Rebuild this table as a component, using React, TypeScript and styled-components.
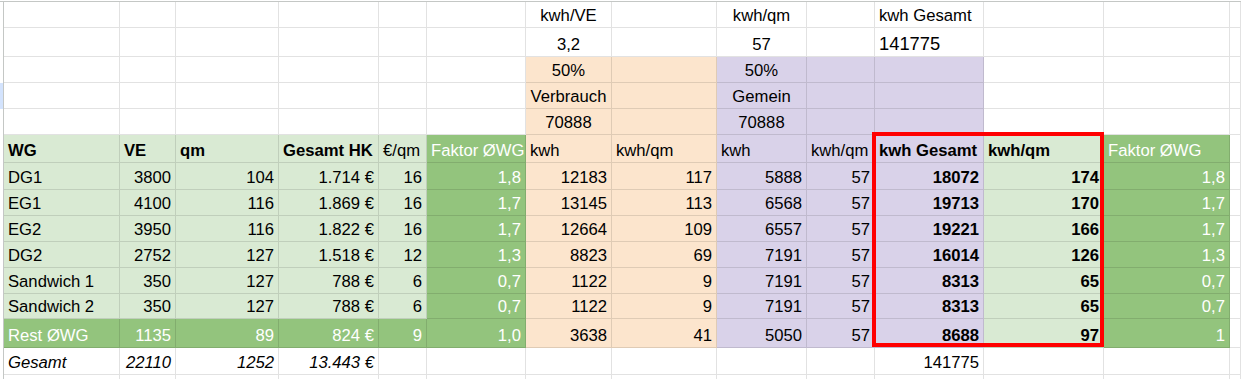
import React from 'react';
import styled, { createGlobalStyle } from 'styled-components';

const GlobalStyle = createGlobalStyle`
  html, body {
    margin: 0;
    padding: 0;
    background: #ffffff;
  }
  body {
    font-family: "Liberation Sans", Arial, sans-serif;
  }
`;

// column tracks: row-header strip, A..M, then the clipped N
const COLUMNS = '4px 116px 56px 103px 100px 48px 99px 86px 105px 90px 68px 109px 120px 126px 1fr';

const fills = {
  white: '#ffffff',
  mint: '#d9ead3',
  green: '#93c47d',
  peach: '#fce5cd',
  lilac: '#d9d2e9',
};

type Fill = keyof typeof fills;
type Align = 'left' | 'center' | 'right';

type CellSpec = {
  text?: string;
  fill?: Fill;
  align?: Align;
  bold?: boolean;
  italic?: boolean;
  light?: boolean;
  big?: boolean;
};

type RowSpec = {
  height: number;
  selected?: boolean;
  cells: CellSpec[];
};

const Sheet = styled.div`
  position: relative;
  width: 1241px;
  height: 379px;
  overflow: hidden;
  font-size: 16.67px;
  color: #000000;
`;

const TopRule = styled.div`
  height: 1px;
  margin-top: 1px;
  background: #c4c7c5;
`;

const Row = styled.div<{ $height: number }>`
  display: grid;
  grid-template-columns: ${COLUMNS};
  height: ${(p) => p.$height}px;
`;

const RowHandle = styled.div<{ $selected?: boolean }>`
  box-sizing: border-box;
  border-right: 1px solid #c4c7c5;
  background: ${(p) => (p.$selected ? '#d3e3fd' : '#ffffff')};
`;

const justify: Record<Align, string> = {
  left: 'flex-start',
  center: 'center',
  right: 'flex-end',
};

const Cell = styled.div<{
  $fill: Fill;
  $align: Align;
  $bold?: boolean;
  $italic?: boolean;
  $light?: boolean;
  $big?: boolean;
}>`
  box-sizing: border-box;
  display: flex;
  align-items: flex-end;
  justify-content: ${(p) => justify[p.$align]};
  min-width: 0;
  padding: 0 4px 2px;
  border-right: 1px solid rgba(0, 0, 0, 0.115);
  border-bottom: 1px solid rgba(0, 0, 0, 0.115);
  background: ${(p) => fills[p.$fill]};
  color: ${(p) => (p.$light ? '#ffffff' : '#000000')};
  font-weight: ${(p) => (p.$bold ? 700 : 400)};
  font-style: ${(p) => (p.$italic ? 'italic' : 'normal')};
  font-size: ${(p) => (p.$big ? '18.33px' : 'inherit')};
  line-height: ${(p) => (p.$big ? '21px' : '19px')};
  white-space: nowrap;
`;

const Highlight = styled.div`
  position: absolute;
  left: 872px;
  top: 132px;
  width: 232px;
  height: 215px;
  box-sizing: border-box;
  border: 4px solid #ff0000;
  pointer-events: none;
`;

const line = (cells: Record<number, CellSpec>): CellSpec[] =>
  Array.from({ length: 14 }, (_, i) => cells[i] ?? {});

const dataRow = (values: string[], rest = false): CellSpec[] => {
  const [name, ve, qm, hk, perQm, factor, kwh1, qm1, kwh2, qm2, total, totalQm, factor2] = values;
  const base: Fill = rest ? 'green' : 'mint';
  return [
    { text: name, fill: base, light: rest },
    { text: ve, fill: base, align: 'right', light: rest },
    { text: qm, fill: base, align: 'right', light: rest },
    { text: hk, fill: base, align: 'right', light: rest },
    { text: perQm, fill: base, align: 'right', light: rest },
    { text: factor, fill: 'green', align: 'right', light: true },
    { text: kwh1, fill: 'peach', align: 'right' },
    { text: qm1, fill: 'peach', align: 'right' },
    { text: kwh2, fill: 'lilac', align: 'right' },
    { text: qm2, fill: 'lilac', align: 'right' },
    { text: total, fill: 'lilac', align: 'right', bold: true },
    { text: totalQm, fill: 'mint', align: 'right', bold: true },
    { text: factor2, fill: 'green', align: 'right', light: true },
    {},
  ];
};

const rows: RowSpec[] = [
  {
    height: 26,
    cells: line({
      6: { text: 'kwh/VE', align: 'center' },
      8: { text: 'kwh/qm', align: 'center' },
      10: { text: 'kwh Gesamt' },
    }),
  },
  {
    height: 29,
    cells: line({
      6: { text: '3,2', align: 'center' },
      8: { text: '57', align: 'center' },
      10: { text: '141775', big: true },
    }),
  },
  {
    height: 26,
    cells: line({
      6: { text: '50%', fill: 'peach', align: 'center' },
      7: { fill: 'peach' },
      8: { text: '50%', fill: 'lilac', align: 'center' },
      9: { fill: 'lilac' },
      10: { fill: 'lilac' },
    }),
  },
  {
    height: 26,
    selected: true,
    cells: line({
      6: { text: 'Verbrauch', fill: 'peach', align: 'center' },
      7: { fill: 'peach' },
      8: { text: 'Gemein', fill: 'lilac', align: 'center' },
      9: { fill: 'lilac' },
      10: { fill: 'lilac' },
    }),
  },
  {
    height: 26,
    cells: line({
      6: { text: '70888', fill: 'peach', align: 'center' },
      7: { fill: 'peach' },
      8: { text: '70888', fill: 'lilac', align: 'center' },
      9: { fill: 'lilac' },
      10: { fill: 'lilac' },
    }),
  },
  {
    height: 28,
    cells: line({
      0: { text: 'WG', fill: 'mint', bold: true },
      1: { text: 'VE', fill: 'mint', bold: true },
      2: { text: 'qm', fill: 'mint', bold: true },
      3: { text: 'Gesamt HK', fill: 'mint', bold: true },
      4: { text: '€/qm', fill: 'mint' },
      5: { text: 'Faktor ØWG', fill: 'green', light: true },
      6: { text: 'kwh', fill: 'peach' },
      7: { text: 'kwh/qm', fill: 'peach' },
      8: { text: 'kwh', fill: 'lilac' },
      9: { text: 'kwh/qm', fill: 'lilac' },
      10: { text: 'kwh Gesamt', fill: 'lilac', bold: true },
      11: { text: 'kwh/qm', fill: 'mint', bold: true },
      12: { text: 'Faktor ØWG', fill: 'green', light: true },
    }),
  },
  { height: 27, cells: dataRow(['DG1', '3800', '104', '1.714 €', '16', '1,8', '12183', '117', '5888', '57', '18072', '174', '1,8']) },
  { height: 26, cells: dataRow(['EG1', '4100', '116', '1.869 €', '16', '1,7', '13145', '113', '6568', '57', '19713', '170', '1,7']) },
  { height: 26, cells: dataRow(['EG2', '3950', '116', '1.822 €', '16', '1,7', '12664', '109', '6557', '57', '19221', '166', '1,7']) },
  { height: 26, cells: dataRow(['DG2', '2752', '127', '1.518 €', '12', '1,3', '8823', '69', '7191', '57', '16014', '126', '1,3']) },
  { height: 26, cells: dataRow(['Sandwich 1', '350', '127', '788 €', '6', '0,7', '1122', '9', '7191', '57', '8313', '65', '0,7']) },
  { height: 25, cells: dataRow(['Sandwich 2', '350', '127', '788 €', '6', '0,7', '1122', '9', '7191', '57', '8313', '65', '0,7']) },
  { height: 29, cells: dataRow(['Rest ØWG', '1135', '89', '824 €', '9', '1,0', '3638', '41', '5050', '57', '8688', '97', '1'], true) },
  {
    height: 27,
    cells: line({
      0: { text: 'Gesamt', italic: true },
      1: { text: '22110', align: 'right', italic: true },
      2: { text: '1252', align: 'right', italic: true },
      3: { text: '13.443 €', align: 'right', italic: true },
      10: { text: '141775', align: 'right' },
    }),
  },
  { height: 30, cells: line({}) },
];

export default function App() {
  return (
    <>
      <GlobalStyle />
      <Sheet>
        <TopRule />
        {rows.map((row, r) => (
          <Row key={r} $height={row.height}>
            <RowHandle $selected={row.selected} />
            {row.cells.map((cell, c) => (
              <Cell
                key={c}
                $fill={cell.fill ?? 'white'}
                $align={cell.align ?? 'left'}
                $bold={cell.bold}
                $italic={cell.italic}
                $light={cell.light}
                $big={cell.big}
              >
                {cell.text}
              </Cell>
            ))}
          </Row>
        ))}
        <Highlight />
      </Sheet>
    </>
  );
}
